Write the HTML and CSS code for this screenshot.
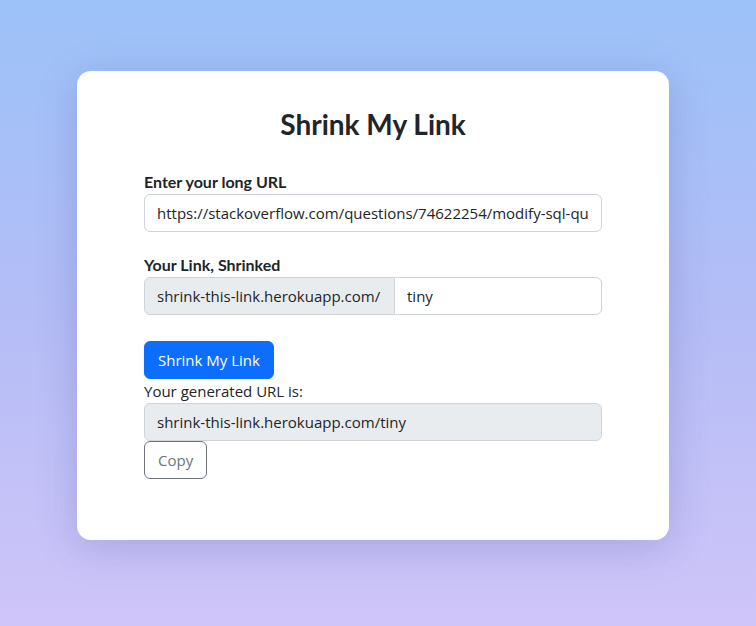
FILE: index.html
```html
<!DOCTYPE html>
<html>
<head>
<meta charset="utf-8">
<link rel="stylesheet" href="styles.css">
</head>
<body>
<main class="page">
  <section class="card">
    <h1 class="title">Shrink My Link</h1>
    <div class="field">
      <label class="label">Enter your long URL</label>
      <input class="input" type="text" value="https://stackoverflow.com/questions/74622254/modify-sql-query-to-find-something">
    </div>
    <div class="field">
      <label class="label">Your Link, Shrinked</label>
      <div class="group">
        <span class="addon">shrink-this-link.herokuapp.com/</span>
        <input class="input group-input" type="text" value="tiny">
      </div>
    </div>
    <button class="btn-primary">Shrink My Link</button>
    <div class="result-label">Your generated URL is:</div>
    <input class="input input-disabled" type="text" value="shrink-this-link.herokuapp.com/tiny" disabled>
    <div><button class="btn-outline">Copy</button></div>
  </section>
</main>
</body>
</html>
```

FILE: styles.css
```css
* { box-sizing: border-box; }
html, body { margin: 0; height: 100%; }
body {
  background: linear-gradient(to bottom, #9cc2f9 0%, #b4bdf6 50%, #cfc5f9 100%);
  font-family: "Open Sans", "Noto Sans", sans-serif;
  color: #212529;
}
.page {
  padding-top: 71px;
  padding-left: 77px;
}
.card {
  width: 592px;
  height: 469px;
  background: #fff;
  border-radius: 14px;
  box-shadow: 0 8px 40px rgba(60, 60, 140, 0.22);
  padding: 35px 67px 0 67px;
}
.title {
  margin: 0 0 28px 0;
  font-family: "Lato", "Noto Sans", sans-serif;
  font-weight: 700;
  font-size: 28px;
  line-height: 36px;
  text-align: center;
  color: #212529;
}
.field { margin-bottom: 21px; }
.label {
  display: block;
  font-family: "Lato", "Noto Sans", sans-serif;
  font-weight: 700;
  font-size: 16px;
  line-height: 24px;
  margin-bottom: 0;
  color: #212529;
}
.input {
  display: block;
  width: 100%;
  height: 38px;
  border: 1px solid #ced4da;
  border-radius: 6px;
  padding: 0 12px;
  font-family: "Open Sans", "Noto Sans", sans-serif;
  font-size: 15px;
  color: #212529;
  background: #fff;
  outline: none;
}
.group { display: flex; height: 38px; }
.addon {
  display: flex;
  align-items: center;
  width: 251px;
  padding: 0 12px;
  background: #e9ecef;
  border: 1px solid #ced4da;
  border-radius: 6px 0 0 6px;
  font-size: 15px;
  color: #212529;
  white-space: nowrap;
}
.group-input {
  flex: 1;
  margin-left: -1px;
  border-radius: 0 6px 6px 0;
}
.btn-primary {
  display: block;
  margin-top: 26px;
  height: 38px;
  padding: 0 13px;
  background: #0d6efd;
  color: #fff;
  border: 1px solid #0d6efd;
  border-radius: 6px;
  font-family: "Open Sans", "Noto Sans", sans-serif;
  font-size: 15px;
}
.result-label {
  font-size: 15px;
  line-height: 24px;
}
.input-disabled {
  background: #e9ecef;
  color: #212529;
}
.btn-outline {
  height: 38px;
  padding: 0 13px;
  background: #fff;
  color: #6c757d;
  border: 1px solid #6c757d;
  border-radius: 6px;
  font-family: "Open Sans", "Noto Sans", sans-serif;
  font-size: 15px;
}
```
